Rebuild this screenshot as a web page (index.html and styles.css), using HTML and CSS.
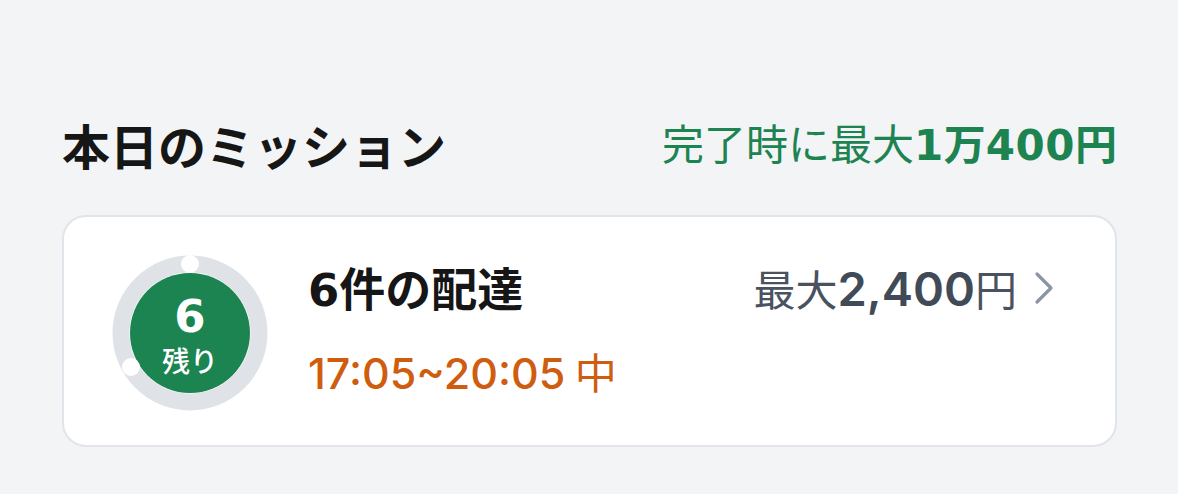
FILE: index.html
```html
<!DOCTYPE html>
<html lang="ja">
<head>
<meta charset="utf-8">
<link rel="stylesheet" href="styles.css">
</head>
<body>
<main class="page">
  <header class="head">
    <h1 class="title">本日のミッション</h1>
    <p class="total">完了時に最大<b><span class="num-wide">1</span>万<span class="num-wide">400</span>円</b></p>
  </header>
  <section class="card">
    <div class="ring">
      <svg class="ring-svg" width="158" height="158" viewBox="0 0 158 158">
        <circle cx="79" cy="79" r="69" fill="none" stroke="#dfe2e7" stroke-width="17"/>
        <circle cx="79" cy="79" r="60" fill="#1b8450"/>
        <circle cx="79" cy="10" r="9" fill="#ffffff"/>
        <circle cx="20" cy="113" r="9" fill="#ffffff"/>
      </svg>
      <div class="ring-text">
        <span class="ring-num">6</span>
        <span class="ring-label">残り</span>
      </div>
    </div>
    <div class="info">
      <div class="row">
        <h2 class="name"><span class="name-num">6</span>件の配達</h2>
        <div class="price">最大<b>2,400</b>円
          <svg class="chev" width="22" height="34" viewBox="0 0 22 34"><path d="M4 3 L18 17 L4 31" fill="none" stroke="#8c95a3" stroke-width="3.2" stroke-linecap="round" stroke-linejoin="round"/></svg>
        </div>
      </div>
      <p class="time"><span class="time-num">17:05~20:05</span> <span class="time-state">中</span></p>
    </div>
  </section>
</main>
</body>
</html>
```

FILE: styles.css
```css
html, body {
  margin: 0;
  padding: 0;
  background: #f3f4f6;
}
body {
  font-family: "Noto Sans CJK JP", "Noto Sans", sans-serif;
  color: #1a1a1a;
}
.page {
  padding: 112px 61px 0 62px;
}
.head {
  display: flex;
  justify-content: space-between;
  align-items: flex-end;
  margin-bottom: 39px;
}
.title {
  margin: 0;
  font-size: 48px;
  font-weight: 700;
  line-height: 64px;
  color: #161616;
}
.total {
  margin: 0 0 2px 0;
  font-size: 42px;
  line-height: 56px;
  font-weight: 400;
  color: #1d8350;
}
.total b {
  font-weight: 700;
}
.num-wide {
  font-family: "DejaVu Sans", sans-serif;
  font-weight: 700;
  letter-spacing: 0.5px;
}
.card {
  background: #ffffff;
  border: 2px solid #e1e4ea;
  border-radius: 24px;
  box-sizing: border-box;
  height: 232px;
  display: flex;
  align-items: center;
  padding: 0 60px 0 47px;
  gap: 39px;
}
.ring {
  position: relative;
  width: 158px;
  height: 158px;
  flex: none;
  margin-top: 4px;
}
.ring-svg {
  display: block;
}
.ring-text {
  position: absolute;
  inset: 0;
  display: flex;
  flex-direction: column;
  align-items: center;
  justify-content: center;
  color: #ffffff;
  padding-top: 4px;
}
.ring-num {
  font-family: "DejaVu Sans", sans-serif;
  font-size: 45px;
  font-weight: 700;
  line-height: 46px;
}
.ring-label {
  font-size: 28px;
  font-weight: 500;
  line-height: 34px;
  margin-top: 3px;
}
.info {
  flex: 1;
  display: flex;
  flex-direction: column;
  gap: 27px;
  padding-bottom: 7px;
}
.row {
  display: flex;
  justify-content: space-between;
  align-items: center;
}
.name {
  margin: 0;
  font-size: 46px;
  line-height: 56px;
  font-weight: 700;
  color: #161616;
}
.name-num {
  font-family: "DejaVu Sans", sans-serif;
  font-weight: 700;
  font-size: 45px;
}
.price {
  display: flex;
  align-items: baseline;
  font-size: 42px;
  line-height: 56px;
  color: #4a5260;
}
.price b {
  font-family: "Inter", sans-serif;
  font-size: 47px;
  font-weight: 600;
  color: #414a57;
}
.chev {
  margin-left: 16px;
  align-self: center;
}
.time {
  margin: 0;
  font-size: 42px;
  line-height: 50px;
  font-weight: 500;
  color: #cf5d10;
}
.time-num {
  font-family: "Inter", sans-serif;
  font-weight: 500;
  font-size: 43px;
}
.time-state {
  font-weight: 400;
}
```
